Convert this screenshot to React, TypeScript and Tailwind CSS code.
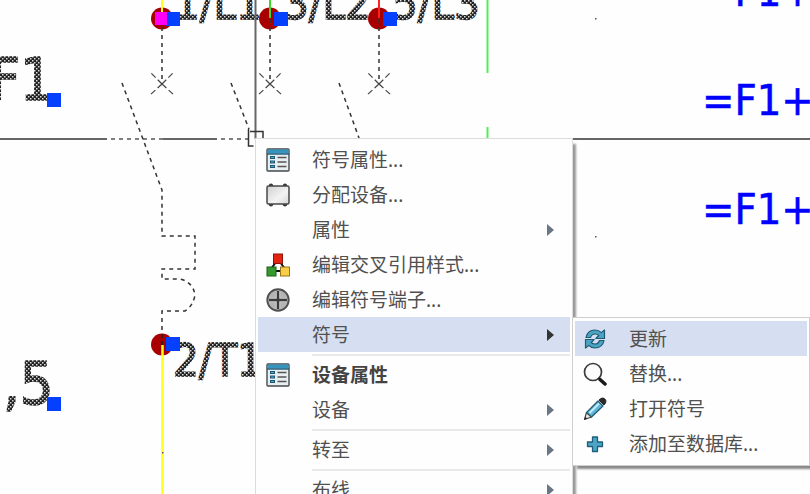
import type { ReactNode } from "react";
import clsx from "clsx";

type Entry = {
  label: string;
  icon?: ReactNode;
  arrow?: boolean;
  active?: boolean;
  bold?: boolean;
  divider?: boolean;
};

const TableIcon = () => (
  <svg viewBox="0 0 24 24" className="size-6">
    <rect x="1" y="1" width="22" height="22" rx="1" fill="#e9eef0" stroke="#444a4e" strokeWidth="1.4" />
    <rect x="1.5" y="1.5" width="21" height="4" fill="#3594bd" />
    <path d="M1 6h22" stroke="#1c5876" strokeWidth="1.4" />
    <path d="M4 9.5h5M4 14h5M4 18.5h5" stroke="#1c5876" strokeWidth="3" />
    <path d="M5 9.5h3M5 14h3M5 18.5h3" stroke="#4ba6ca" strokeWidth="1.2" />
    <path d="M11.5 9.5h9M11.5 14h9M11.5 18.5h9" stroke="#555" strokeWidth="1.3" />
  </svg>
);

const DeviceIcon = () => (
  <svg viewBox="0 0 24 24" className="size-6">
    <defs>
      <linearGradient id="device" x1="0" y1="0" x2="1" y2="1">
        <stop offset="0" stopColor="#cfcfcf" />
        <stop offset=".6" stopColor="#f3f3f3" />
        <stop offset="1" stopColor="#d4d4d4" />
      </linearGradient>
    </defs>
    <g fill="#3a3a3a">
      <circle cx="5" cy="2.7" r="2.2" />
      <circle cx="19" cy="2.7" r="2.2" />
      <circle cx="5" cy="21.3" r="2.2" />
      <circle cx="19" cy="21.3" r="2.2" />
    </g>
    <rect x="1" y="3" width="22" height="18" rx="1.5" fill="url(#device)" stroke="#484848" strokeWidth="1.5" />
  </svg>
);

const CrossRefIcon = () => (
  <svg viewBox="0 0 24 24" className="size-6">
    <path d="M10 9 5 16M14 9l5 7M10 18h5" stroke="#111" strokeWidth="2" />
    <rect x="7.5" y="1" width="9" height="9.5" fill="#e32410" stroke="#8d1409" />
    <rect x="1" y="14" width="9" height="9" fill="#35992d" stroke="#1d5e18" />
    <rect x="14.5" y="14" width="9" height="9" fill="#f8cd47" stroke="#97741a" />
  </svg>
);

const TerminalIcon = () => (
  <svg viewBox="0 0 24 24" className="size-6">
    <circle cx="12" cy="12" r="10.7" fill="#b4b4b4" stroke="#505050" strokeWidth="1.9" />
    <path d="M12 3v18M3 12h18" stroke="#d0d0d0" strokeWidth="4.5" />
    <path d="M12 3v18M3 12h18" stroke="#3c3c3c" strokeWidth="2.4" />
  </svg>
);

const RefreshIcon = () => (
  <svg viewBox="0 0 24 24" className="size-6" fill="#4ba3c3" stroke="#1f5a74" strokeWidth="1.2" strokeLinejoin="round">
    <path d="M3 10.5C4 5.5 7.500 3 12 3c2.800 0 4.800 1 6.200 2.600L21.500 3v8.500h-8.700l3-3C14.800 7.500 13.600 7 12 7c-2.300 0-3.800 1.200-4.500 3.500Z" />
    <path d="M21 13.500c-1 5-4.500 7.500-9 7.500-2.800 0-4.800-1-6.200-2.600L2.500 21v-8.500h8.700l-3 3C9.200 16.500 10.400 17 12 17c2.300 0 3.800-1.200 4.500-3.500Z" />
  </svg>
);

const SearchIcon = () => (
  <svg viewBox="0 0 24 24" className="size-6">
    <circle cx="10" cy="10" r="8.5" fill="#fbfbfb" stroke="#3b3b3b" strokeWidth="1.7" />
    <path d="m15.5 15.5 2.500 2.500" stroke="#333" strokeWidth="2" />
    <path d="m17 17.500 5 4.500" stroke="#1a1a1a" strokeWidth="3.5" strokeLinecap="round" />
  </svg>
);

const PencilIcon = () => (
  <svg viewBox="0 0 24 24" className="size-6" strokeLinejoin="round">
    <path d="m1.500 22.500 2-7 5 4.500Z" fill="#f2ead8" stroke="#444" strokeWidth="1.2" />
    <path d="M3.500 15.500 15 4l5 5L8.500 20Z" fill="#5cb5da" stroke="#285a70" strokeWidth="1.3" />
    <path d="M6.500 16 16 6.500" stroke="#c7ebf7" strokeWidth="2" />
    <path d="m16 3 2-1.500c3-1.500 6 1.500 4.500 4.500L21 8Z" fill="#2b2b2b" stroke="#222" />
    <path d="m1.500 22.500.8-2.800 2 2Z" fill="#222" />
  </svg>
);

const PlusIcon = () => (
  <svg viewBox="0 0 24 24" className="size-6">
    <path d="M9.500 5h5v5h5v4.500h-5v5h-5v-5h-5V10h5Z" fill="#4ba5c7" stroke="#205f7b" strokeWidth="1.3" strokeLinejoin="round" />
  </svg>
);

const mainEntries: Entry[] = [
  { label: "符号属性...", icon: <TableIcon /> },
  { label: "分配设备...", icon: <DeviceIcon /> },
  { label: "属性", arrow: true },
  { label: "编辑交叉引用样式...", icon: <CrossRefIcon /> },
  { label: "编辑符号端子...", icon: <TerminalIcon /> },
  { label: "符号", arrow: true, active: true },
  { label: "设备属性", icon: <TableIcon />, bold: true, divider: true },
  { label: "设备", arrow: true },
  { label: "转至", arrow: true, divider: true },
  { label: "布线", arrow: true, divider: true },
];

const symbolEntries: Entry[] = [
  { label: "更新", icon: <RefreshIcon />, active: true },
  { label: "替换...", icon: <SearchIcon /> },
  { label: "打开符号", icon: <PencilIcon /> },
  { label: "添加至数据库...", icon: <PlusIcon /> },
];

function MenuList({ entries }: { entries: Entry[] }) {
  return (
    <ul role="menu">
      {entries.map((entry) => (
        <li key={entry.label} role="none">
          {entry.divider && (
            <div className="flex h-[5px] items-center pl-[54px]">
              <div className="h-0.5 w-full bg-[#e9e9e9]" />
            </div>
          )}
          <button
            type="button"
            role="menuitem"
            className={clsx(
              "flex h-[35px] w-full items-center text-left text-[19px] leading-6 whitespace-nowrap",
              entry.active && "bg-[#d5dff1]",
              entry.bold ? "font-bold text-[#444]" : "text-[#505050]"
            )}
          >
            <span className="mr-[22px] ml-2 size-6">{entry.icon}</span>
            <span className="flex-1">{entry.label}</span>
            {entry.arrow && (
              <svg
                viewBox="0 0 7 12"
                className={clsx("mr-4 h-3 w-[7px]", entry.active ? "fill-[#333]" : "fill-[#6b7684]")}
              >
                <path d="M0 0v12l7-6Z" />
              </svg>
            )}
          </button>
        </li>
      ))}
    </ul>
  );
}

/* Connection point of one phase: wire, contact mark and the blue grip */
function Phase({ x, wire }: { x: number; wire: string }) {
  return (
    <g>
      <circle cx={x} cy="18.5" r="11" fill="#a80000" />
      <path d={`M${x} 0v18`} stroke={wire} strokeWidth="2" />
      <path d={`M${x} 19v65`} stroke="#333" strokeWidth="1.5" strokeDasharray="4 4" />
      <path
        d={`M${x} 84l12 11M${x} 84l12-12M${x} 84l-12 11M${x} 84l-12-12`}
        stroke="#444"
        strokeWidth="1.2"
        strokeDasharray="6 3"
      />
      <rect x={x + 4} y="12" width="14" height="14" fill="#0540ff" />
    </g>
  );
}

function Schematic() {
  return (
    <svg className="absolute top-0 left-0 h-[494px] w-[810px]" viewBox="0 0 810 494" fill="none">
      <defs>
        <pattern id="stipple" width="4" height="4" patternUnits="userSpaceOnUse">
          <rect width="4" height="4" fill="#222" />
          <rect width="1.5" height="1.5" fill="#ddd" />
          <rect x="2" y="2" width="1.5" height="1.5" fill="#ddd" />
        </pattern>
      </defs>

      <g className="font-['DejaVu_Sans_Condensed','DejaVu_Sans',sans-serif]">
        <g fill="url(#stipple)" stroke="url(#stipple)" strokeWidth="1.5" fontSize="45">
          <text x="174" y="19">1/L1</text>
          <text x="283" y="19">3/L2</text>
          <text x="392" y="19">5/L3</text>
          <text x="173" y="376">2/T1</text>
          <text x="-10" y="100" fontSize="58">F1</text>
          <text x="3" y="404" fontSize="59">,5</text>
        </g>
        <g fill="#0000ff" stroke="#0000ff" strokeWidth="0.5" fontSize="43">
          <text x="702" y="6">=F1+</text>
          <text x="702" y="115">=F1+</text>
          <text x="702" y="224">=F1+</text>
        </g>
      </g>

      <path d="M0 139h107M163 139h54M573 139h237M255.500 0v139" stroke="#666" strokeWidth="2" />
      <path d="M111 139h52M221 139h30" stroke="#555" strokeWidth="1.5" strokeDasharray="4 4" />

      <Phase x={162} wire="#ffff1a" />
      <rect x="155" y="12" width="12" height="13" fill="#ff00f5" />
      <Phase x={270} wire="#3fd62c" />
      <Phase x={379} wire="#ff2020" />

      <g stroke="#333" strokeWidth="1.5" strokeDasharray="4 4">
        <path d="M122 83l40 107v46h33v33h-33v10h18q13 3 15 16q-2 11-10 16h-23v32" />
        <path d="M231 83l18 46M339 83l20 55" />
      </g>
      <path d="M248.500 129v17h5M250 131.500h13v8" stroke="#333" strokeWidth="1.5" />

      <path d="M487.500 0v73M487.500 127v12" stroke="#55ec55" strokeWidth="2" />

      <circle cx="162" cy="344.5" r="11" fill="#a80000" />
      <path d="M162 334v11" stroke="#222" strokeWidth="1.5" strokeDasharray="4 3" />
      <path d="M162.500 345v149" stroke="#ffff1a" strokeWidth="2.5" />
      <g fill="#0540ff">
        <rect x="166" y="337" width="14" height="14" />
        <rect x="47" y="93" width="14" height="14" />
        <rect x="47" y="397" width="14" height="14" />
      </g>
      <g fill="#555">
        <rect x="595" y="18" width="1.5" height="1.5" />
        <rect x="595" y="236" width="1.5" height="1.5" />
        <rect x="162" y="452" width="1.5" height="1.5" />
      </g>
    </svg>
  );
}

export default function App() {
  return (
    <main className="relative h-screen overflow-hidden bg-[#fefefe] font-['Noto_Sans','Noto_Sans_CJK_SC',sans-serif]">
      <Schematic />
      <div className="absolute top-[138px] left-[255px] w-[318px] border border-[#dcdcdc] bg-[#fefefe] px-0.5 py-[3px] shadow-[4px_5px_2px_-1px_#999]">
        <MenuList entries={mainEntries} />
        <div className="absolute top-[178px] left-[316px] w-[238px] border border-[#cfcfcf] bg-[#fefefe] px-0.5 pt-[3px] pb-1 shadow-[4px_4px_2px_-1px_#888]">
          <MenuList entries={symbolEntries} />
        </div>
      </div>
    </main>
  );
}
